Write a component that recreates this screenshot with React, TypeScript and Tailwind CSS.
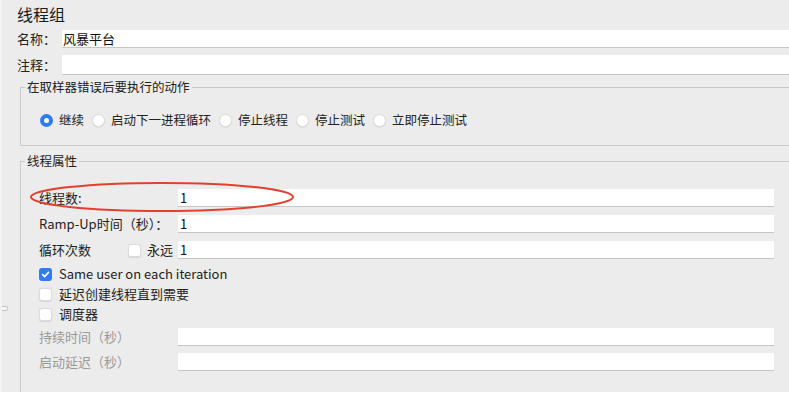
import React from 'react';

const font = { fontFamily: '"Noto Sans CJK SC", "Noto Sans", sans-serif' };

const Radio: React.FC<{ checked?: boolean; label: string }> = ({ checked, label }) => (
  <div className="flex items-center gap-[6px]">
    {checked ? (
      <span className="flex h-[13px] w-[13px] items-center justify-center rounded-full bg-[#2f7bf5]">
        <span className="h-[5px] w-[5px] rounded-full bg-white" />
      </span>
    ) : (
      <span className="h-[13px] w-[13px] rounded-full border border-[#dcdcdc] bg-white shadow-[0_0.5px_1px_rgba(0,0,0,0.12)]" />
    )}
    <span className="text-[12.5px] leading-[16px] text-[#222]">{label}</span>
  </div>
);

const Checkbox: React.FC<{ checked?: boolean }> = ({ checked }) =>
  checked ? (
    <span className="flex h-[13px] w-[13px] items-center justify-center rounded-[3px] bg-[#2f7bf5]">
      <svg width="9" height="9" viewBox="0 0 10 10">
        <path d="M1.8 5.2 L4 7.4 L8.3 2.6" fill="none" stroke="white" strokeWidth="1.8" strokeLinecap="round" strokeLinejoin="round" />
      </svg>
    </span>
  ) : (
    <span className="h-[13px] w-[13px] rounded-[3px] border border-[#dcdcdc] bg-white shadow-[0_0.5px_1px_rgba(0,0,0,0.1)]" />
  );

const Field: React.FC<{ value?: string }> = ({ value }) => (
  <div className="flex h-[18px] w-[596px] items-center border-b border-[#c6c6c6] bg-white pl-[2px] text-[13px] text-[#111]">
    {value}
  </div>
);

const Row: React.FC<{ label: React.ReactNode; value?: string; muted?: boolean }> = ({ label, value, muted }) => (
  <div className="flex items-center">
    <div className={`w-[139px] text-[13px] leading-[18px] ${muted ? 'text-[#9a9a9a]' : 'text-[#222]'}`}>{label}</div>
    <Field value={value} />
  </div>
);

const CheckRow: React.FC<{ checked?: boolean; label: string }> = ({ checked, label }) => (
  <div className="flex h-[20px] items-center gap-[7px]">
    <Checkbox checked={checked} />
    <span className="text-[13px] leading-[18px] text-[#222]">{label}</span>
  </div>
);

export default function App() {
  return (
    <div className="h-[396px] w-[789px] bg-white" style={font}>
      <div className="relative h-[392px] overflow-hidden border-l-2 border-[#f3f3f3] bg-[#ececec]">
        <div className="pl-[15px] pt-[3px] text-[16px] leading-[22px] text-[#1a1a1a]">线程组</div>

        <div className="mt-[5px] flex items-center pl-[15px]">
          <div className="w-[45px] text-[13px] leading-[18px] text-[#222]">名称：</div>
          <div className="-mr-[4px] flex h-[18px] flex-1 items-center border-b border-[#c6c6c6] bg-white pl-[1px] text-[13px] text-[#111]">
            风暴平台
          </div>
        </div>

        <div className="mt-[7px] flex items-center pl-[15px]">
          <div className="w-[45px] text-[13px] leading-[18px] text-[#222]">注释：</div>
          <div className="-mr-[4px] h-[20px] flex-1 border-b border-[#c6c6c6] bg-white" />
        </div>

        <fieldset className="-mr-[6px] ml-[18px] mt-[4px] border border-[#c9c9c9] px-0 pb-[15px] pt-[15px]">
          <legend className="ml-[4px] px-[2px] text-[12.5px] leading-[16px] text-[#222]">在取样器错误后要执行的动作</legend>
          <div className="flex h-[20px] items-center gap-[8px] pl-[19px]">
            <Radio checked label="继续" />
            <Radio label="启动下一进程循环" />
            <Radio label="停止线程" />
            <Radio label="停止测试" />
            <Radio label="立即停止测试" />
          </div>
        </fieldset>

        <fieldset className="-mr-[6px] ml-[18px] mt-[7px] h-[260px] border border-[#c9c9c9] px-0">
          <legend className="ml-[4px] px-[2px] text-[12.5px] leading-[16px] text-[#222]">线程属性</legend>
          <div className="pl-[18px] pt-[20px]">
            <div className="flex flex-col gap-[8px]">
              <Row label="线程数:" value="1" />
              <Row label="Ramp-Up时间（秒）：" value="1" />
              <div className="flex items-center">
                <div className="flex w-[139px] items-center">
                  <span className="w-[89px] text-[13px] leading-[18px] text-[#222]">循环次数</span>
                  <Checkbox />
                  <span className="ml-[6px] text-[13px] leading-[18px] text-[#222]">永远</span>
                </div>
                <Field value="1" />
              </div>
            </div>
            <div className="mt-[5px] flex flex-col">
              <CheckRow checked label="Same user on each iteration" />
              <CheckRow label="延迟创建线程直到需要" />
              <CheckRow label="调度器" />
            </div>
            <div className="mt-[4px] flex flex-col gap-[7px]">
              <Row label="持续时间（秒）" muted />
              <Row label="启动延迟（秒）" muted />
            </div>
          </div>
        </fieldset>

        <svg className="absolute left-[26px] top-[181px]" width="268" height="32" viewBox="0 0 268 32">
          <ellipse cx="134" cy="16" rx="131" ry="14" fill="none" stroke="#e2412f" strokeWidth="2" />
        </svg>

        <div className="absolute left-0 top-[306px] h-[5px] w-[6px] rounded-r-[2px] border border-l-0 border-[#c4c4c4] bg-[#f4f4f4]" />
      </div>
    </div>
  );
}
